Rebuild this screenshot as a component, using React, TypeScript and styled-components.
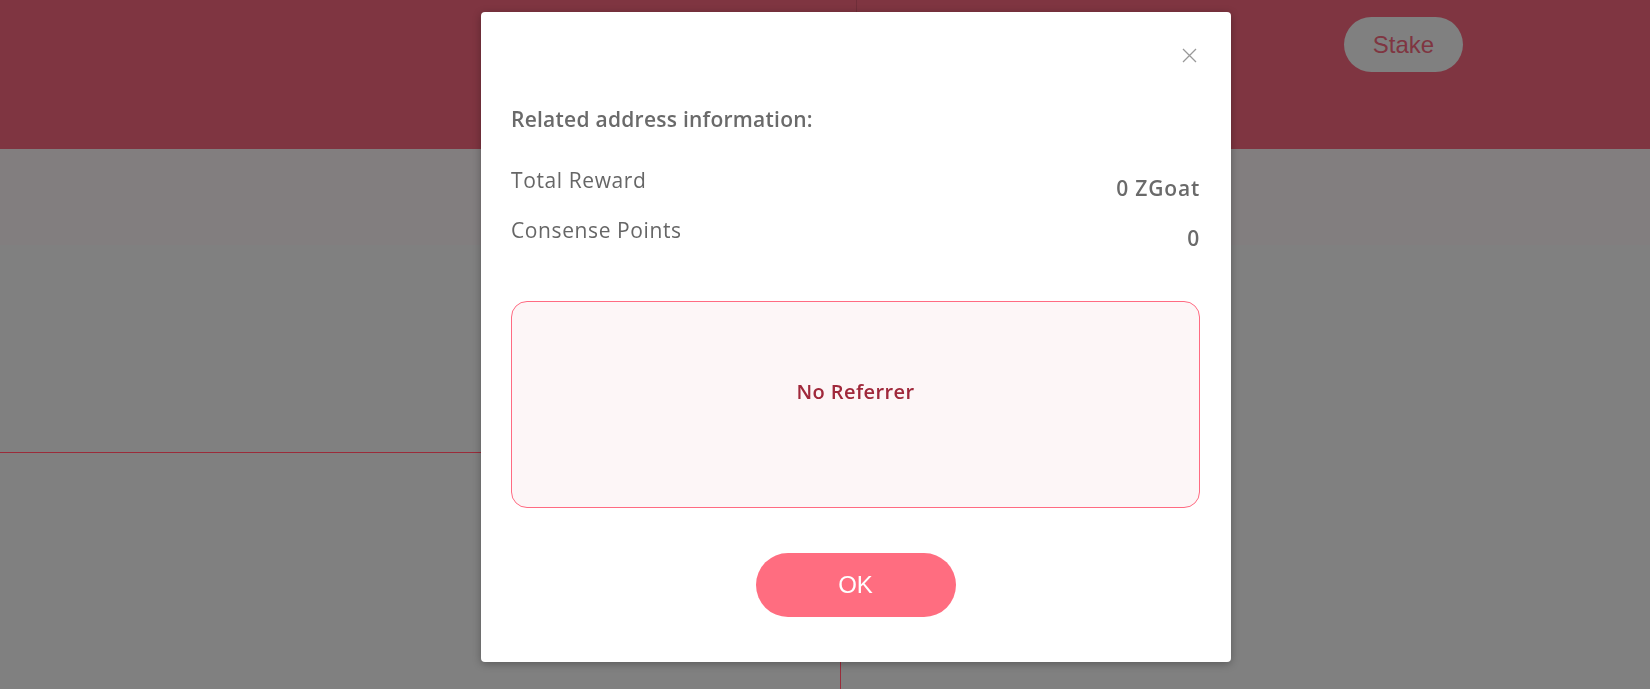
import React from "react";
import styled, { createGlobalStyle } from "styled-components";

const GlobalStyle = createGlobalStyle`
  * { box-sizing: border-box; }
  html, body {
    margin: 0;
    padding: 0;
    background: #808080;
    font-family: "Open Sans", "Noto Sans", sans-serif;
  }
`;

const Page = styled.div`
  min-height: 100vh;
  display: flex;
  flex-direction: column;
  background: #808080;
`;

const Header = styled.header`
  height: 149px;
  background: #7f3541;
  display: grid;
  grid-template-columns: 857px 1fr;
`;

const HeaderLeft = styled.div`
  border-right: 1px solid rgba(0, 0, 0, 0.12);
`;

const HeaderRight = styled.div`
  display: flex;
  justify-content: flex-end;
  align-items: flex-start;
  padding: 17px 187px 0 0;
`;

const StakeButton = styled.button`
  width: 119px;
  height: 55px;
  border: none;
  border-radius: 28px;
  background: #808080;
  color: #7f3541;
  font-family: "Liberation Sans", Arial, sans-serif;
  font-size: 24px;
  cursor: pointer;
`;

const Band = styled.div`
  height: 96px;
  background: #827e7f;
`;

const Content = styled.main`
  flex: 1;
  display: grid;
  grid-template-columns: 841px 1fr;
`;

const Column = styled.div`
  border-right: 1px solid #9a2c3a;
`;

const Cell = styled.div`
  height: 208px;
  border-bottom: 1px solid #9a2c3a;
`;

const Overlay = styled.div`
  position: fixed;
  inset: 0;
  display: flex;
  justify-content: center;
  align-items: flex-start;
  padding-top: 12px;
  padding-left: 62px;
`;

const Modal = styled.div`
  position: relative;
  width: 750px;
  background: #ffffff;
  border-radius: 4px;
  box-shadow: 0 2px 8px rgba(0, 0, 0, 0.3);
  padding: 92px 31px 45px 30px;
  display: flex;
  flex-direction: column;
`;

const CloseButton = styled.button`
  position: absolute;
  top: 36px;
  right: 34px;
  width: 15px;
  height: 15px;
  padding: 0;
  border: none;
  background: transparent;
  cursor: pointer;
  display: flex;
`;

const Title = styled.h3`
  margin: 0;
  font-size: 21px;
  line-height: 30px;
  font-weight: 600;
  color: #6a6a6a;
  letter-spacing: 0.25px;
`;

const InfoList = styled.div`
  margin-top: 31px;
  display: flex;
  flex-direction: column;
  gap: 12px;
`;

const InfoRow = styled.div`
  display: flex;
  justify-content: space-between;
  align-items: flex-start;
`;

const Label = styled.span`
  font-size: 21px;
  line-height: 30px;
  font-weight: 400;
  color: #666666;
  letter-spacing: 0.6px;
`;

const Value = styled.span`
  margin-top: 8px;
  font-size: 21px;
  line-height: 30px;
  font-weight: 600;
  color: #6a6a6a;
  letter-spacing: 0.8px;
`;

const ReferrerBox = styled.div`
  margin-top: 48px;
  height: 207px;
  border: 1px solid #ff6b82;
  border-radius: 16px;
  background: #fdf6f7;
  display: flex;
  align-items: center;
  justify-content: center;
  padding-bottom: 26px;
`;

const ReferrerText = styled.span`
  font-size: 20px;
  line-height: 30px;
  font-weight: 600;
  color: #a0283b;
  letter-spacing: 0.4px;
`;

const OkButton = styled.button`
  align-self: center;
  margin-top: 45px;
  width: 200px;
  height: 64px;
  border: none;
  border-radius: 32px;
  background: #ff6d80;
  color: #ffffff;
  font-family: "Liberation Sans", Arial, sans-serif;
  font-size: 24px;
  cursor: pointer;
`;

export default function App() {
  return (
    <>
      <GlobalStyle />
      <Page>
        <Header>
          <HeaderLeft />
          <HeaderRight>
            <StakeButton>Stake</StakeButton>
          </HeaderRight>
        </Header>
        <Band />
        <Content>
          <Column>
            <Cell />
          </Column>
          <div />
        </Content>
      </Page>
      <Overlay>
        <Modal>
          <CloseButton aria-label="close">
            <svg width="15" height="15" viewBox="0 0 15 15">
              <path d="M1 1 L14 14 M14 1 L1 14" stroke="#999999" strokeWidth="1.3" fill="none" />
            </svg>
          </CloseButton>
          <Title>Related address information:</Title>
          <InfoList>
            <InfoRow>
              <Label>Total Reward</Label>
              <Value>0 ZGoat</Value>
            </InfoRow>
            <InfoRow>
              <Label>Consense Points</Label>
              <Value>0</Value>
            </InfoRow>
          </InfoList>
          <ReferrerBox>
            <ReferrerText>No Referrer</ReferrerText>
          </ReferrerBox>
          <OkButton>OK</OkButton>
        </Modal>
      </Overlay>
    </>
  );
}
